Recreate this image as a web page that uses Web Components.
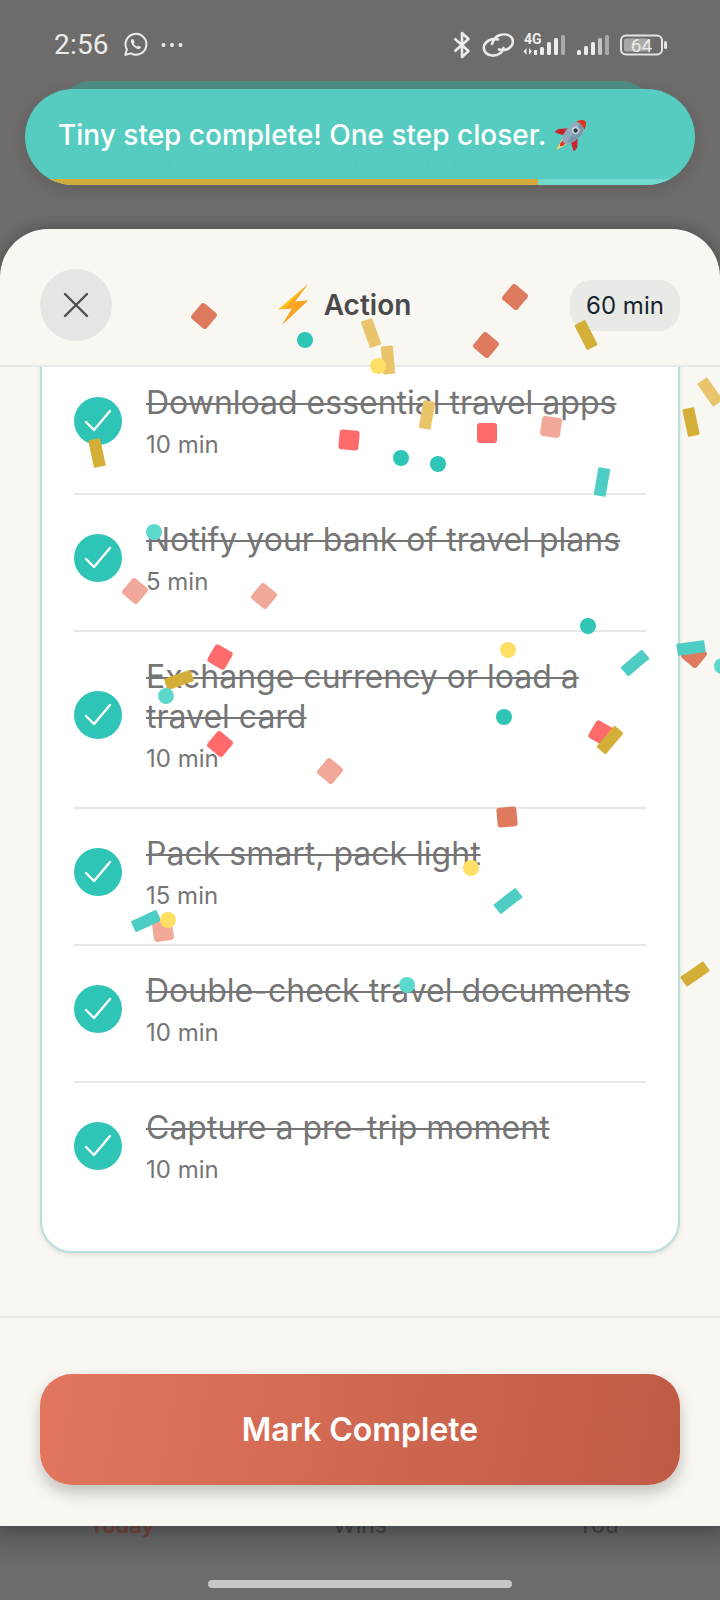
<!DOCTYPE html>
<html lang="en">
<head>
<meta charset="UTF-8">
<title>Action</title>
<style>
    html, body { margin: 0; padding: 0; background: #6d6c6a; }
</style>
</head>
<body>
<app-screen>
    <status-bar></status-bar>
    <toast-card>Tiny step complete! One step closer.</toast-card>
    <action-sheet>
        <sheet-header slot="header" minutes="60 min">Action</sheet-header>
        <task-card>
            <task-row><span>Download essential travel apps</span><span slot="time">10 min</span></task-row>
            <task-row><span>Notify your bank of travel plans</span><span slot="time">5 min</span></task-row>
            <task-row><span>Exchange currency or load a travel card</span><span slot="time">10 min</span></task-row>
            <task-row><span>Pack smart, pack light</span><span slot="time">15 min</span></task-row>
            <task-row><span>Double-check travel documents</span><span slot="time">10 min</span></task-row>
            <task-row last><span>Capture a pre-trip moment</span><span slot="time">10 min</span></task-row>
        </task-card>
        <mark-button slot="footer">Mark Complete</mark-button>
    </action-sheet>
    <nav-peek></nav-peek>
    <confetti-layer></confetti-layer>
</app-screen>

<script>
    const FONT = '"Inter", "Liberation Sans", sans-serif';

    function shadow(el, html) {
        el.attachShadow({ mode: 'open' }).innerHTML = html;
    }

    class AppScreen extends HTMLElement {
        constructor() {
            super();
            shadow(this, `<style>
                :host { display: flex; flex-direction: column; position: relative; width: 720px; height: 1600px;
                    overflow: hidden; background: #6d6c6a; font-family: ${FONT}; }
            </style><slot></slot>`);
        }
    }

    class StatusBar extends HTMLElement {
        constructor() {
            super();
            shadow(this, `<style>
                :host { display: flex; align-items: center; justify-content: space-between; height: 81px; flex: none;
                    padding: 8px 53px 0 54px; box-sizing: border-box; color: #ececea; }
                .left, .right { display: flex; align-items: center; }
                .time { font: 400 28px/32px Roboto, sans-serif; letter-spacing: .2px; }
                .wa { margin-left: 14px; }
                .dots { margin-left: 13px; }
                svg { display: block; flex: none; }
                text { font-family: Roboto, sans-serif; fill: #ececea; }
            </style>
            <div class="left">
                <span class="time">2:56</span>
                <svg class="wa" width="25" height="25" viewBox="0 0 24 24" fill="none" stroke="#ececea" stroke-width="1.9">
                    <path d="M2.2 22l1.5-5.4A10 10 0 1 1 7.6 20.5z" stroke-linejoin="round"/>
                    <path d="M8.6 6.9c-.8.6-1.2 1.5-.9 2.8.7 2.9 3.3 5.6 6.3 6.5 1.3.4 2.3 0 2.9-.9.3-.5.3-.9 0-1.1l-1.9-1c-.3-.1-.5-.1-.7.1l-.7.9c-1.400-.5-2.700-1.700-3.400-3.100l.7-.8c.2-.2.2-.4.1-.7l-.8-1.900c-.3-.6-1.500-1.100-2.100-.8z" fill="#ececea" stroke="none"/>
                </svg>
                <svg class="dots" width="22" height="6" viewBox="0 0 22 6" fill="#ececea">
                    <circle cx="2.500" cy="3" r="2"/><circle cx="11" cy="3" r="2"/><circle cx="19.500" cy="3" r="2"/>
                </svg>
            </div>
            <div class="right">
                <svg width="18" height="28" viewBox="0 0 18 28" fill="none" stroke="#ececea" stroke-width="2.600" stroke-linejoin="round">
                    <path d="M1.500 7.500l14 12.500-6.500 6V2l6.500 6L1.500 20.500"/>
                </svg>
                <svg style="margin-left:11px" width="32" height="24" viewBox="0 0 32 24" fill="none" stroke="#ececea" stroke-width="2.600" stroke-linecap="round">
                    <path d="M16 6.500C12 5.500 7 6.500 4 9.500 1 12.500 1 17 4 20c3 3 9 3.500 13 1 2.500-1.500 4-3.500 4.500-6"/>
                    <path d="M10 11c1-4 3.500-7.500 8-9 4-1.200 9-.5 11.500 2.500 2.500 3 1.500 7.500-1.500 10-3 2.500-7 3-11 2"/>
                </svg>
                <svg style="margin:-6px 0 0 9px" width="47" height="30" viewBox="0 -6 47 30">
                    <text x="1" y="11" font-size="14" font-weight="700">4G</text>
                    <path d="M3.500 15v7l-3-3.500zM6 15l3 3.500-3 3.500zM11 17h3v5h-3z" fill="#ececea"/>
                    <rect x="17" y="14" width="4" height="8" rx="1.500" fill="#ececea"/>
                    <rect x="24" y="9" width="4" height="13" rx="1.500" fill="#ececea"/>
                    <rect x="31" y="5" width="4" height="17" rx="1.500" fill="#ececea"/>
                    <rect x="38" y="2" width="4" height="20" rx="1.500" fill="#a9a9a7"/>
                </svg>
                <svg style="margin-left:6px" width="34" height="24" viewBox="0 0 34 24">
                    <rect x="1" y="17" width="4" height="5" rx="1.500" fill="#ececea"/>
                    <rect x="8" y="13" width="4" height="9" rx="1.500" fill="#ececea"/>
                    <rect x="15" y="9" width="4" height="13" rx="1.500" fill="#ececea"/>
                    <rect x="22" y="5" width="4" height="17" rx="1.500" fill="#c5c5c3"/>
                    <rect x="29" y="2" width="4" height="20" rx="1.500" fill="#a9a9a7"/>
                </svg>
                <svg style="margin-left:10px" width="47" height="22" viewBox="0 0 47 22">
                    <rect x="1" y="1.500" width="41" height="19" rx="5" fill="none" stroke="#e4e4e2" stroke-width="2"/>
                    <rect x="4" y="4.500" width="24" height="13" rx="2" fill="#a9a9a7"/>
                    <text x="21.500" y="17.500" font-size="19" text-anchor="middle">64</text>
                    <rect x="44" y="7" width="3" height="8" rx="1.500" fill="#e4e4e2"/>
                </svg>
            </div>`);
        }
    }

    class ToastCard extends HTMLElement {
        constructor() {
            super();
            shadow(this, `<style>
                :host { display: block; position: relative; flex: none; height: 96px; margin: 8px 25px 0; }
                .back { position: absolute; left: 35px; right: 43px; top: -8px; height: 60px; border-radius: 32px;
                    background: #4f8d86; }
                .toast { position: absolute; inset: 0; border-radius: 48px; background: #56ccc0; overflow: hidden;
                    box-shadow: 0 4px 16px rgba(0,0,0,.12); display: flex; align-items: flex-start; box-sizing: border-box;
                    padding: 30px 0 0 33px; color: #fff; font-size: 28px; font-weight: 500; line-height: 32px; }
                .ghost { position: absolute; left: 90px; top: 62px; font-size: 42px; font-weight: 400; line-height: 18px;
                    letter-spacing: 2.5px; color: rgba(70,185,172,.08); white-space: nowrap; }
                .msg { position: relative; white-space: nowrap; }
                svg { position: relative; margin: -3px 0 0 9px; flex: none; }
                .bar { position: absolute; left: 0; right: 0; bottom: 0; height: 6px; background: #73d8ce; }
                .fill { width: 513px; height: 100%; background: #d4ac3c; }
            </style>
            <div class="back"></div>
            <div class="toast">
                <span class="ghost">Good afternoon</span>
                <span class="msg"><slot></slot></span>
                <svg width="34" height="35" viewBox="0 0 32 33">
                    <g transform="translate(18 15) rotate(45)">
                        <path d="M-3.500 12L0 24l3.500-12z" fill="#f6d566"/>
                        <path d="M-6 1l-6.500 7.500-.5 5 7.500-4zM6 1l6.500 7.500.5 5-7.500-4z" fill="#c8262c"/>
                        <path d="M-1.800 8h3.600v8.500L0 19l-1.800-2.500z" fill="#d9352c"/>
                        <ellipse cx="0" cy="0" rx="7" ry="14" fill="#8fa9bd"/>
                        <path d="M-2 -13.500C1-14 6-7 6.800-1 7 4 5 9 2.500 12.500z" fill="#7a96ab"/>
                        <path d="M-5.500 -8.500Q0 -21 5.500 -8.500Q0 -11-5.500 -8.500z" fill="#d93a1e"/>
                        <circle cx="0" cy="-2" r="3.600" fill="#c3d3df"/>
                        <circle cx="0" cy="-2" r="2" fill="#2f3a44"/>
                    </g>
                </svg>
                <div class="bar"><div class="fill"></div></div>
            </div>`);
        }
    }

    class ActionSheet extends HTMLElement {
        constructor() {
            super();
            shadow(this, `<style>
                :host { display: flex; flex-direction: column; position: relative; z-index: 2; flex: none; height: 1297px;
                    margin-top: 44px; background: #f8f7f2; border-radius: 48px 48px 0 0;
                    box-shadow: 0 -2px 14px rgba(0,0,0,.22), 0 8px 18px rgba(0,0,0,.12); }
                .body { flex: 1; min-height: 0; overflow: hidden; padding: 0 40px; }
                .foot { flex: none; border-top: 2px solid #e8e8e6; padding: 56px 40px 41px; }
            </style>
            <slot name="header"></slot>
            <div class="body"><slot></slot></div>
            <div class="foot"><slot name="footer"></slot></div>`);
        }
    }

    class SheetHeader extends HTMLElement {
        constructor() {
            super();
            shadow(this, `<style>
                :host { display: flex; align-items: center; justify-content: space-between; flex: none; height: 138px;
                    box-sizing: border-box; padding: 16px 40px 0; border-bottom: 2px solid #e8e8e6; }
                .close { width: 72px; height: 72px; border-radius: 50%; background: #e5e5e4; display: flex;
                    align-items: center; justify-content: center; }
                .title { display: flex; align-items: center; gap: 15px; color: #4a4a4a; font-size: 28px; font-weight: 600;
                    line-height: 40px; margin-left: 6px; }
                .pill { width: 110px; height: 51px; border-radius: 21px; background: #e9eae6; color: #17232e;
                    font-size: 24px; line-height: 51px; text-align: center; }
            </style>
            <div class="close">
                <svg width="28" height="28" viewBox="0 0 28 28" stroke="#505050" stroke-width="2.400" stroke-linecap="round">
                    <path d="M3 3l22 22M25 3L3 25"/>
                </svg>
            </div>
            <div class="title">
                <svg width="32" height="42" viewBox="0 0 32 42">
                    <path d="M31 0L1 25.500l14-1L5 41l26-24.500-13 1z" fill="#fcc21b"/>
                    <path d="M31 0L18 17.500l13-1L5 41l10-16.500-8 .5z" fill="#f79329" opacity=".65"/>
                </svg>
                <span><slot></slot></span>
            </div>
            <div class="pill"></div>`);
            this.shadowRoot.querySelector('.pill').textContent = this.getAttribute('minutes');
        }
    }

    class TaskCard extends HTMLElement {
        constructor() {
            super();
            // top edge is scrolled away under the header, only the sides and bottom show
            shadow(this, `<style>
                :host { display: block; margin-top: -51px; padding: 40px 32px 33px; background: #fff;
                    border: 2px solid #b8dedb; border-radius: 32px; box-shadow: 0 2px 5px rgba(0,0,0,.1); }
            </style><slot></slot>`);
        }
    }

    class TaskRow extends HTMLElement {
        constructor() {
            super();
            shadow(this, `<style>
                :host { display: flex; align-items: center; gap: 24px; padding: 21px 0 30px;
                    border-bottom: 2px solid #e8e8e8; }
                :host([last]) { border-bottom: 0; }
                .check { width: 48px; height: 48px; border-radius: 50%; background: #2ec4b6; flex: none;
                    display: flex; align-items: center; justify-content: center; }
                .text { padding-top: 4px; }
                .title { font-size: 32px; line-height: 40px; color: #757575; text-decoration: line-through;
                    text-decoration-thickness: 2px; }
                .time { font-size: 24px; line-height: 36px; margin-top: 4px; color: #757575; }
            </style>
            <div class="check">
                <svg width="30" height="26" viewBox="0 0 30 26" fill="none" stroke="#fff" stroke-width="2.400" stroke-linecap="round" stroke-linejoin="round">
                    <path d="M3 14l8 8L27 3"/>
                </svg>
            </div>
            <div class="text">
                <div class="title"><slot></slot></div>
                <div class="time"><slot name="time"></slot></div>
            </div>`);
        }
    }

    class MarkButton extends HTMLElement {
        constructor() {
            super();
            shadow(this, `<style>
                :host { display: block; height: 111px; border-radius: 32px; color: #fff; font-size: 32px; font-weight: 600;
                    line-height: 111px; text-align: center;
                    background: linear-gradient(100deg, #e2765e 0%, #bf5a44 100%);
                    box-shadow: 0 8px 16px rgba(0,0,0,.22); }
            </style><slot></slot>`);
        }
    }

    class NavPeek extends HTMLElement {
        constructor() {
            super();
            shadow(this, `<style>
                :host { display: block; position: relative; flex: 1; background: linear-gradient(#5b5d5f 0, #5e6061 14px, #6c6c6a 40px); }
                .labels { display: grid; grid-template-columns: 244px 232px 244px; margin-top: -17px;
                    font-size: 23px; line-height: 32px; text-align: center; color: #3d3f42; }
                .on { color: #6e3f38; font-weight: 600; font-size: 22px; }
                .home { position: absolute; left: 208px; top: 54px; width: 304px; height: 8px; border-radius: 4px;
                    background: #c6c6c4; }
            </style>
            <div class="labels"><span class="on">Today</span><span>Wins</span><span>You</span></div>
            <div class="home"></div>`);
        }
    }

    // x, y = middle of the piece; kind = dot / square / strip
    const PIECES = [
        ['square', 204, 316, '#e07a5f', 40], ['square', 515, 297, '#e07a5f', 40], ['square', 486, 345, '#e07a5f', 40],
        ['dot', 305, 340, '#2ec4b6'],
        ['strip', 371, 333, '#e9c46a', -20], ['strip', 388, 360, '#e9c46a', -5], ['dot', 378, 366, '#ffe066'],
        ['strip', 586, 335, '#d4af37', -27], ['strip', 427, 415, '#e9c46a', 10],
        ['square', 349, 440, '#ff6b6b', 5], ['square', 487, 433, '#ff6b6b', 0], ['square', 551, 427, '#f2a899', 8],
        ['dot', 401, 458, '#2ec4b6'], ['dot', 438, 464, '#2ec4b6'],
        ['strip', 710, 392, '#e9c46a', -35], ['strip', 691, 422, '#d4af37', -12], ['strip', 97, 453, '#d4af37', -12],
        ['strip', 602, 482, '#4ecdc4', 10],
        ['dot', 154, 532, '#5dd9cc'],
        ['square', 135, 591, '#f2a899', 40], ['square', 264, 596, '#f2a899', 40],
        ['dot', 588, 626, '#2ec4b6'], ['square', 220, 657, '#ff6b6b', 30], ['dot', 508, 650, '#ffe066'],
        ['strip', 635, 663, '#4ecdc4', 50],
        ['square', 694, 655, '#e07a5f', 40], ['strip', 691, 648, '#4ecdc4', 82],
        ['dot', 722, 666, '#5dd9cc'],
        ['strip', 179, 680, '#d4af37', 70], ['dot', 166, 696, '#5dd9cc'], ['dot', 504, 717, '#2ec4b6'],
        ['square', 220, 744, '#ff6b6b', 40], ['square', 330, 771, '#f2a899', 40],
        ['square', 601, 733, '#ff6b6b', 30], ['strip', 610, 740, '#d4af37', 40],
        ['square', 507, 817, '#e07a5f', -5], ['dot', 471, 868, '#ffe066'], ['strip', 508, 901, '#4ecdc4', 52],
        ['square', 163, 931, '#f2a899', -8], ['strip', 146, 921, '#4ecdc4', 65], ['dot', 168, 920, '#ffe066'],
        ['dot', 407, 985, '#5dd9cc'], ['strip', 695, 974, '#d4af37', 55]
    ];

    class ConfettiLayer extends HTMLElement {
        constructor() {
            super();
            const sizes = { dot: [16, 16, '50%'], square: [20, 20, '3px'], strip: [12, 28, '1px'] };
            const bits = PIECES.map(([kind, x, y, color, rot = 0]) => {
                const [w, h, r] = sizes[kind];
                return `<i style="left:${x - w / 2}px;top:${y - h / 2}px;width:${w}px;height:${h}px;border-radius:${r};background:${color};transform:rotate(${rot}deg)"></i>`;
            }).join('');
            shadow(this, `<style>
                :host { display: block; position: absolute; inset: 0; z-index: 5; pointer-events: none; }
                i { position: absolute; display: block; }
            </style>${bits}`);
        }
    }

    customElements.define('app-screen', AppScreen);
    customElements.define('status-bar', StatusBar);
    customElements.define('toast-card', ToastCard);
    customElements.define('action-sheet', ActionSheet);
    customElements.define('sheet-header', SheetHeader);
    customElements.define('task-card', TaskCard);
    customElements.define('task-row', TaskRow);
    customElements.define('mark-button', MarkButton);
    customElements.define('nav-peek', NavPeek);
    customElements.define('confetti-layer', ConfettiLayer);
</script>
</body>
</html>
